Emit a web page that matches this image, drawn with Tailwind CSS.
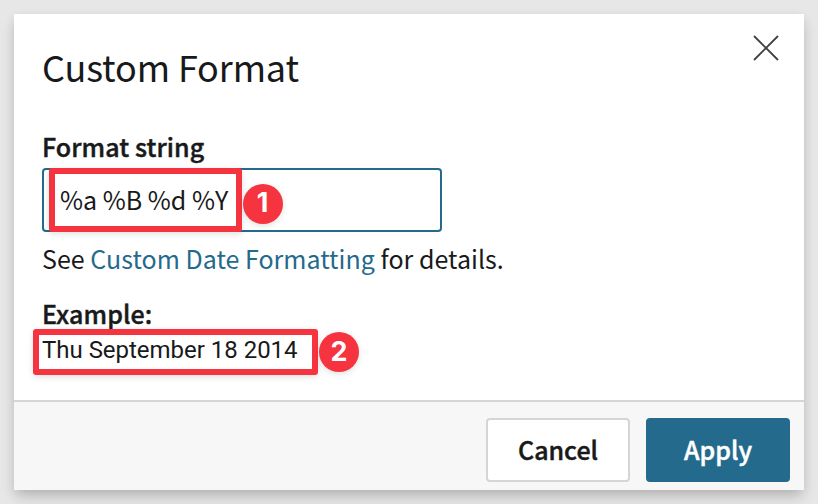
<!DOCTYPE html>
<html lang="en">
<head>
<meta charset="utf-8">
<title>Custom Format</title>
<script src="https://cdn.jsdelivr.net/npm/@tailwindcss/browser@4"></script>
</head>
<body class="h-[504px] overflow-hidden bg-[#e7e7e7] p-[14px] font-['Noto_Sans_CJK_SC','Noto_Sans',sans-serif] text-[25px] text-[#18191a]">
  <div class="relative flex h-[476px] w-[790px] flex-col bg-white shadow-[0_8px_14px_-2px_rgba(0,0,0,0.2),0_2px_10px_rgba(0,0,0,0.06)]" role="dialog">
    <header class="flex items-start justify-between pl-7 pr-[25px] pt-5">
      <h1 class="mt-2 text-[36px] leading-[48px] font-normal tracking-[-0.12px]">Custom Format</h1>
      <button aria-label="Close" class="block">
        <svg class="block" width="26" height="28" viewBox="0 0 26 28" fill="none" stroke="#404040" stroke-width="1.8"><path d="M1 2L25 26M25 2L1 26"/></svg>
      </button>
    </header>
    <main class="flex-1 pl-7 pt-9">
      <div class="h-[42px] leading-[40px] font-medium tracking-[0.08px] [-webkit-text-stroke:0.45px_#18191a]">Format string</div>
      <div class="relative flex h-16 w-[400px] items-center rounded-[4px] border-2 border-[#246a8c] pl-4">
        <span class="relative -top-px leading-10">%a %B %d %Y</span>
        <div class="absolute -top-[2px] left-[5px] h-[64px] w-[193px] rounded-[3px] border-6 border-[#f63440] shadow-[0_2px_6px_rgba(0,0,0,0.12)]"></div>
        <div class="absolute left-[198.5px] top-[13.5px] flex size-10 items-center justify-center rounded-full bg-[#f63440] font-[Inter,sans-serif] text-[27px] font-bold text-white shadow-[0_2px_6px_rgba(0,0,0,0.12)]">1</div>
      </div>
      <p class="mt-[6px] leading-[40px] tracking-[0.025px]">See <a class="text-[#246a8c]">Custom Date Formatting</a> for details.</p>
      <div class="mt-[19px] leading-8 font-medium tracking-[0.08px] [-webkit-text-stroke:0.45px_#18191a]">Example:</div>
      <div class="relative mt-[7px] font-[Roboto,sans-serif] text-[24px] leading-7">
        <span class="tracking-[-0.02px]">Thu September 18 2014</span>
        <div class="absolute -left-[9.5px] -top-[7px] h-[46px] w-[285px] rounded-[3px] border-6 border-[#f63440] shadow-[0_2px_6px_rgba(0,0,0,0.12)]"></div>
        <div class="absolute left-[277px] -top-[4.5px] flex size-10 items-center justify-center rounded-full bg-[#f63440] font-[Inter,sans-serif] text-[27px] font-bold text-white shadow-[0_2px_6px_rgba(0,0,0,0.12)]">2</div>
      </div>
    </main>
    <footer class="flex h-[90px] items-start justify-end gap-4 border-t-2 border-[#d5d5d5] bg-[#f7f7f7] pr-[14px] pt-4">
      <button class="h-16 w-36 rounded-[4px] border-2 border-[#d5d5d5] bg-white font-medium [-webkit-text-stroke:0.45px_#18191a]">Cancel</button>
      <button class="h-16 w-36 rounded-[4px] bg-[#246a8c] font-medium text-white [-webkit-text-stroke:0.45px_#ffffff]">Apply</button>
    </footer>
  </div>
</body>
</html>
